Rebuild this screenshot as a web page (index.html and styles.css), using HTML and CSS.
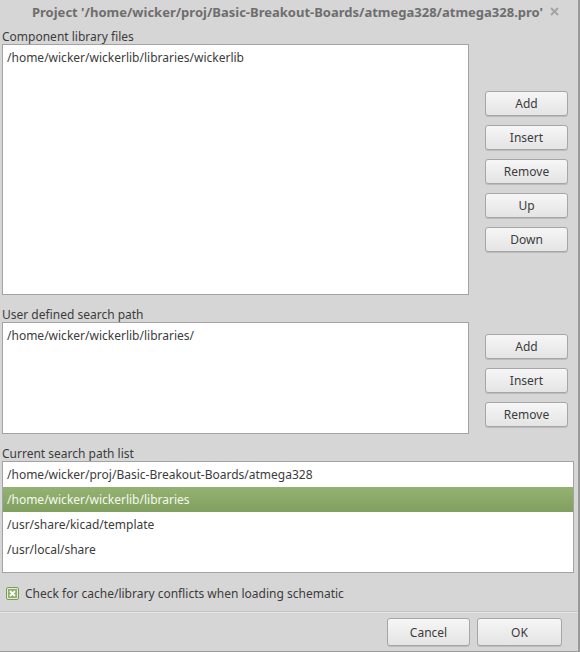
FILE: index.html
```html
<!DOCTYPE html>
<html>
<head>
<meta charset="utf-8">
<link rel="stylesheet" href="styles.css">
</head>
<body>
<div class="window">
  <div class="titlebar">
    <span class="title">Project '/home/wicker/proj/Basic-Breakout-Boards/atmega328/atmega328.pro'</span>
    <svg class="close" width="9" height="9" viewBox="0 0 9 9"><path d="M1 1L8 8M8 1L1 8" stroke="#a4a4a4" stroke-width="2"/></svg>
  </div>
  <div class="content">
    <div class="label">Component library files</div>
    <div class="section sec1">
      <div class="listbox lb1"><div class="item">/home/wicker/wickerlib/libraries/wickerlib</div></div>
      <div class="btncol col1">
        <button class="btn">Add</button>
        <button class="btn">Insert</button>
        <button class="btn">Remove</button>
        <button class="btn">Up</button>
        <button class="btn">Down</button>
      </div>
    </div>
    <div class="label">User defined search path</div>
    <div class="section sec2">
      <div class="listbox lb2"><div class="item">/home/wicker/wickerlib/libraries/</div></div>
      <div class="btncol col2">
        <button class="btn">Add</button>
        <button class="btn">Insert</button>
        <button class="btn">Remove</button>
      </div>
    </div>
    <div class="label">Current search path list</div>
    <div class="listbox lb3">
      <div class="row">/home/wicker/proj/Basic-Breakout-Boards/atmega328</div>
      <div class="row selected">/home/wicker/wickerlib/libraries</div>
      <div class="row">/usr/share/kicad/template</div>
      <div class="row">/usr/local/share</div>
    </div>
    <div class="check">
      <span class="box"><svg width="7" height="7" viewBox="0 0 7 7"><path d="M1 1L6 6M6 1L1 6" stroke="#fff" stroke-width="1.8"/></svg></span>
      <span>Check for cache/library conflicts when loading schematic</span>
    </div>
  </div>
  <div class="footer">
    <button class="btn big cancel">Cancel</button>
    <button class="btn big ok">OK</button>
  </div>
</div>
</body>
</html>
```
FILE: styles.css
```css
* { box-sizing: border-box; }
html, body { margin: 0; padding: 0; }
body {
  width: 580px;
  height: 652px;
  background: #d6d6d6;
  font-family: "Noto Sans", "DejaVu Sans", sans-serif;
  font-size: 12px;
  color: #3c3c3c;
  overflow: hidden;
}
.window {
  width: 580px;
  height: 652px;
  display: flex;
  flex-direction: column;
  border-right: 2px solid #9a9a9a;
  border-bottom: 1px solid #9a9a9a;
}
.titlebar {
  height: 24px;
  display: flex;
  align-items: center;
  padding-left: 32px;
}
.title {
  font-weight: bold;
  font-size: 13px;
  color: #6e6e6e;
}
.close {
  margin-left: 7px;
  margin-top: -1px;
}
.content {
  padding: 2px 4px 0 2px;
  display: flex;
  flex-direction: column;
}
.label {
  height: 18px;
  padding-top: 3px;
  line-height: 15px;
  color: #3c3c3c;
}
.section {
  display: flex;
}
.listbox {
  background: #fff;
  border: 1px solid #a3a3a3;
}
.item { padding: 5px 4px 0; line-height: 16px; }
.lb1 { width: 467px; height: 251px; }
.lb2 { width: 467px; height: 112px; }
.lb3 { width: 572px; height: 112px; }
.sec1 { margin-bottom: 9px; }
.sec2 { margin-bottom: 9px; }
.btncol {
  display: flex;
  flex-direction: column;
  gap: 9px;
  margin-left: 16px;
}
.col1 { padding-top: 47px; }
.col2 { padding-top: 12px; }
.btn {
  width: 83px;
  height: 25px;
  font-family: inherit;
  font-size: 12px;
  color: #3c3c3c;
  background: linear-gradient(#f6f6f6, #e4e4e4);
  border: 1px solid #a6a6a6;
  border-radius: 3px;
  box-shadow: 0 1px 0 rgba(0,0,0,0.12);
  padding: 0;
}
.row {
  height: 25px;
  line-height: 25px;
  padding-left: 4px;
}
.selected {
  background: linear-gradient(#94b272, #81a05f);
  color: #f4f8ee;
}
.check {
  display: flex;
  align-items: center;
  margin-top: 12px;
  padding-left: 4px;
  height: 16px;
}
.box {
  width: 13px;
  height: 13px;
  border: 1px solid #7d9a5c;
  border-radius: 2px;
  background: #e4ecd8;
  display: flex;
  align-items: center;
  justify-content: center;
  margin-right: 6px;
  padding: 1px;
}
.box svg {
  background: #8faf6c;
  width: 9px;
  height: 9px;
  padding: 1px;
}
.footer {
  margin-top: 10px;
  border-top: 1px solid #c4c4c4;
  box-shadow: 0 1px 0 #e6e6e6 inset;
  display: flex;
  justify-content: flex-end;
  gap: 7px;
  padding: 6px 16px 0 0;
}
.big { height: 28px; }
.cancel { width: 83px; }
.ok { width: 85px; }
```
